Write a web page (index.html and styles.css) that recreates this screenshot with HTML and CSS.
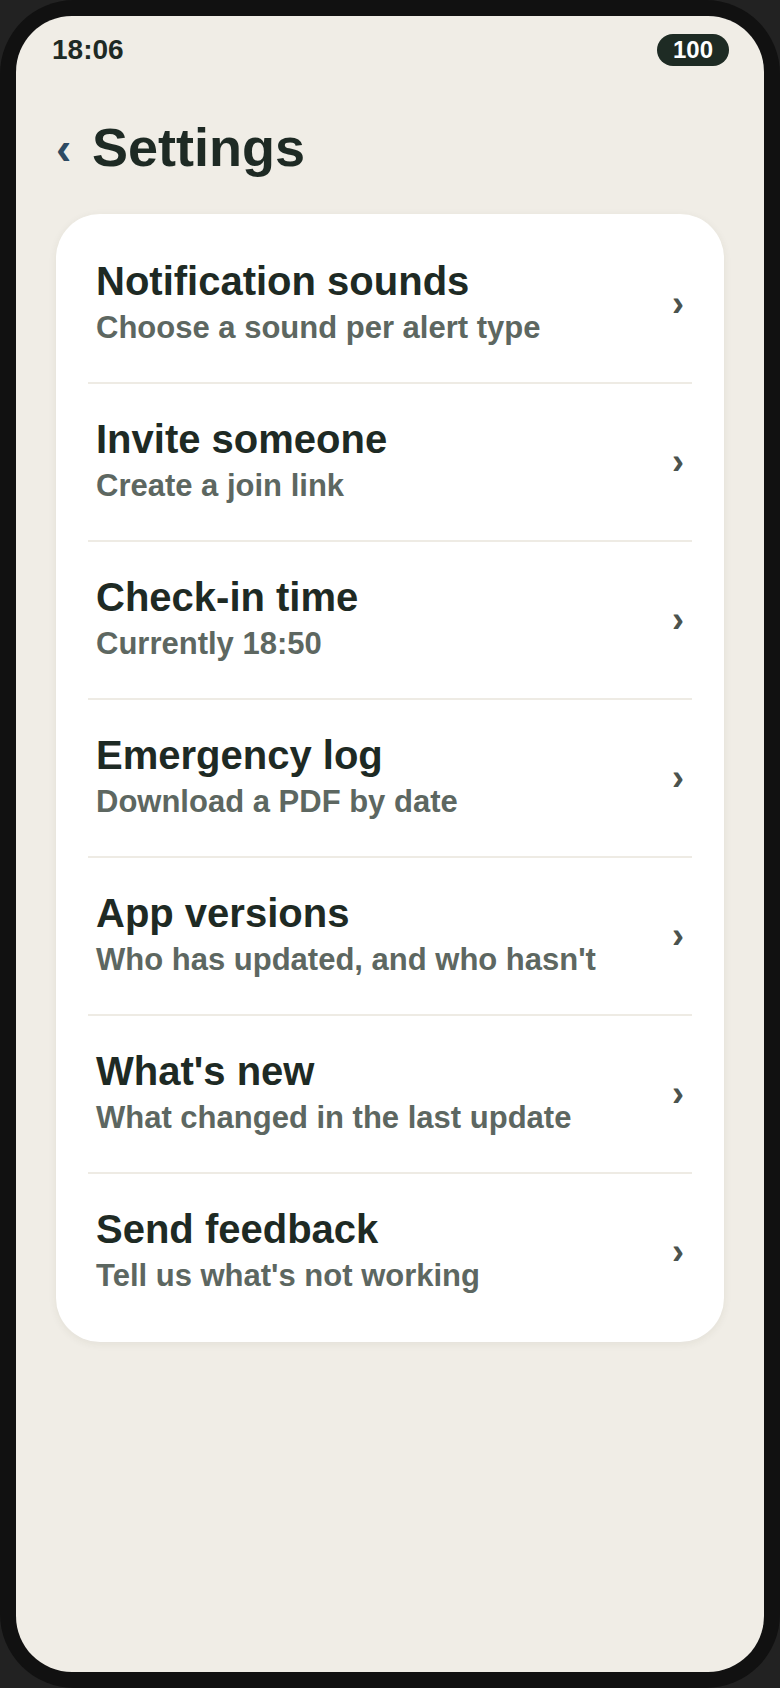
FILE: index.html
```html
<!DOCTYPE html>
<html lang="en">
<head>
<meta charset="utf-8">
<title>Settings</title>
<link rel="stylesheet" href="styles.css">
</head>
<body>
<div class="frame">
  <div class="screen">
    <div class="status">
      <span class="time">18:06</span>
      <span class="battery">100</span>
    </div>
    <div class="header">
      <span class="back">‹</span>
      <h1 class="title">Settings</h1>
    </div>
    <div class="card">
      <div class="row">
        <div class="text">
          <div class="row-title">Notification sounds</div>
          <div class="row-sub">Choose a sound per alert type</div>
        </div>
        <span class="chev">›</span>
      </div>
      <div class="row">
        <div class="text">
          <div class="row-title">Invite someone</div>
          <div class="row-sub">Create a join link</div>
        </div>
        <span class="chev">›</span>
      </div>
      <div class="row">
        <div class="text">
          <div class="row-title">Check-in time</div>
          <div class="row-sub">Currently 18:50</div>
        </div>
        <span class="chev">›</span>
      </div>
      <div class="row">
        <div class="text">
          <div class="row-title">Emergency log</div>
          <div class="row-sub">Download a PDF by date</div>
        </div>
        <span class="chev">›</span>
      </div>
      <div class="row">
        <div class="text">
          <div class="row-title">App versions</div>
          <div class="row-sub">Who has updated, and who hasn't</div>
        </div>
        <span class="chev">›</span>
      </div>
      <div class="row">
        <div class="text">
          <div class="row-title">What's new</div>
          <div class="row-sub">What changed in the last update</div>
        </div>
        <span class="chev">›</span>
      </div>
      <div class="row">
        <div class="text">
          <div class="row-title">Send feedback</div>
          <div class="row-sub">Tell us what's not working</div>
        </div>
        <span class="chev">›</span>
      </div>
    </div>
  </div>
</div>
</body>
</html>
```
FILE: styles.css
```css
* { box-sizing: border-box; }
html, body {
  margin: 0;
  padding: 0;
  background: #222222;
}
body {
  font-family: "Liberation Sans", Arial, sans-serif;
  width: 780px;
  height: 1688px;
  overflow: hidden;
}
.frame {
  width: 780px;
  height: 1688px;
  background: #111111;
  border-radius: 74px;
  padding: 16px;
}
.screen {
  width: 100%;
  height: 100%;
  background: #f0ede6;
  border-radius: 56px;
  overflow: hidden;
  display: flex;
  flex-direction: column;
}
.status {
  margin-top: 18px;
  height: 32px;
  padding: 0 35px 0 36px;
  display: flex;
  align-items: center;
  justify-content: space-between;
}
.time {
  font-size: 28px;
  font-weight: 700;
  color: #1e2a24;
  line-height: 32px;
}
.battery {
  height: 32px;
  padding: 0 16px;
  border-radius: 16px;
  background: #1e2b24;
  color: #ffffff;
  font-size: 24px;
  font-weight: 700;
  line-height: 32px;
}
.header {
  margin-top: 49px;
  height: 64px;
  padding-left: 40px;
  display: flex;
  align-items: center;
}
.back {
  font-size: 46px;
  font-weight: 700;
  color: #2d4a62;
  line-height: 64px;
  width: 36px;
  padding-top: 1px;
}
.title {
  margin: 0;
  font-size: 54px;
  font-weight: 700;
  color: #1e2a24;
  line-height: 64px;
}
.card {
  margin: 35px 40px 0;
  background: #ffffff;
  border-radius: 44px;
  padding: 12px 32px;
  box-shadow: 0 2px 8px rgba(60, 50, 30, 0.07);
}
.row {
  height: 158px;
  padding: 0 8px 0 8px;
  display: flex;
  align-items: center;
  justify-content: space-between;
  border-bottom: 2px solid #eeebe4;
}
.row:last-child {
  height: 156px;
  border-bottom: none;
}
.text {
  display: flex;
  flex-direction: column;
  padding-bottom: 2px;
}
.row-title {
  font-size: 40px;
  font-weight: 700;
  color: #1e2a24;
  line-height: 44px;
}
.row-sub {
  margin-top: 5px;
  font-size: 31px;
  font-weight: 700;
  color: #5d6761;
  line-height: 40px;
}
.chev {
  font-size: 36px;
  font-weight: 700;
  color: #4b534e;
  line-height: 40px;
}
```
